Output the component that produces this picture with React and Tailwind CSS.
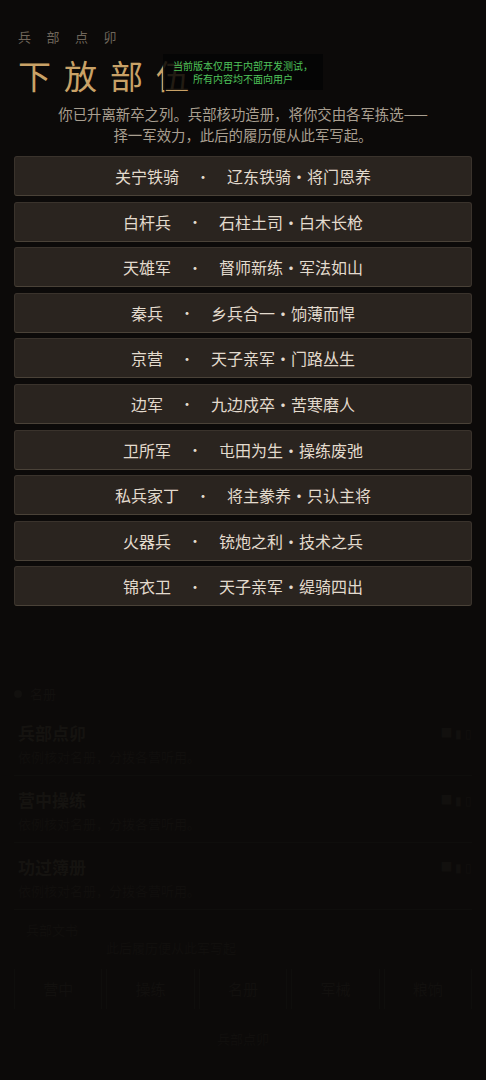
import React from "react";

const items = [
  ["关宁铁骑", "辽东铁骑·将门恩养"],
  ["白杆兵", "石柱土司·白木长枪"],
  ["天雄军", "督师新练·军法如山"],
  ["秦兵", "乡兵合一·饷薄而悍"],
  ["京营", "天子亲军·门路丛生"],
  ["边军", "九边戍卒·苦寒磨人"],
  ["卫所军", "屯田为生·操练废弛"],
  ["私兵家丁", "将主豢养·只认主将"],
  ["火器兵", "铳炮之利·技术之兵"],
  ["锦衣卫", "天子亲军·缇骑四出"],
];

const font = { fontFamily: '"Noto Sans CJK SC", "Noto Sans", sans-serif' };

export default function App() {
  return (
    <div className="h-[1080px] w-full bg-[#0c0a09] relative overflow-hidden" style={font}>
      {/* header */}
      <div className="px-[18px] pt-[27px]">
        <div className="text-[13px] leading-[20px] tracking-[15.5px] text-[#6f665b]">兵部点卯</div>
        <div className="relative mt-[8px] h-[40px]">
          <div className="text-[33px] leading-[40px] tracking-[13px] text-[#c9a267]">下放部伍</div>
          <div className="absolute left-[145px] top-[-1px] w-[160px] h-[36px] bg-[#050505]/85 flex flex-col items-center justify-center text-[10px] leading-[13px] text-[#4fc35a]">
            <div>当前版本仅用于内部开发测试，</div>
            <div>所有内容均不面向用户</div>
          </div>
        </div>
      </div>
      <div className="mt-[8px] text-center text-[14.4px] leading-[21px] text-[#a99f90] px-[10px]">
        <div>你已升离新卒之列。兵部核功造册，将你交由各军拣选——</div>
        <div>择一军效力，此后的履历便从此军写起。</div>
      </div>

      {/* list */}
      <div className="mt-[11px] mx-[14px] flex flex-col gap-[5.6px]">
        {items.map(([a, b]) => (
          <div
            key={a}
            className="h-[40px] rounded-[3px] bg-[#2a241f] border border-[#3a332c] border-b-[#4a4238] flex items-center justify-center gap-[17px] text-[16px] text-[#e3dbce]"
          >
            <span>{a}</span>
            <span className="text-[14px]">·</span>
            <span>{b}</span>
          </div>
        ))}
      </div>

      {/* faint underlying page */}
      <div className="mt-[78px] px-[14px] text-[#12100e]">
        <div className="flex items-center gap-[8px] text-[13px]">
          <span className="w-[8px] h-[8px] rounded-full bg-[#12100e]" />
          <span>名册</span>
        </div>
        <div className="mt-[16px] flex flex-col gap-[11px]">
          {["兵部点卯", "营中操练", "功过簿册"].map((t) => (
            <div key={t} className="border-b border-[#0f0e0c] pb-[8px] pl-[4px]">
              <div className="flex items-center justify-between">
                <span className="text-[17px] font-bold text-[#151310]">{t}</span>
                <span className="text-[12px] text-[#12100e]">■ ▮ ▯</span>
              </div>
              <div className="mt-[2px] text-[13px] text-[#110f0d]">依例核对名册，分拨各营听用。</div>
            </div>
          ))}
          <div className="pl-[12px] text-[13px] text-[#110f0d] leading-[18px]">
            <div>兵部文书</div>
            <div className="pl-[80px]">此后履历便从此军写起</div>
          </div>
        </div>
        <div className="mt-[12px] grid grid-cols-5 gap-[4px]">
          {["营中", "操练", "名册", "军械", "粮饷"].map((t) => (
            <div key={t} className="h-[40px] border-x border-[#0f0e0c] flex items-center justify-center text-[15px] text-[#12100e]">
              {t}
            </div>
          ))}
        </div>
        <div className="mt-[20px] text-center text-[13px] text-[#110f0d]">兵部点卯</div>
      </div>
    </div>
  );
}
